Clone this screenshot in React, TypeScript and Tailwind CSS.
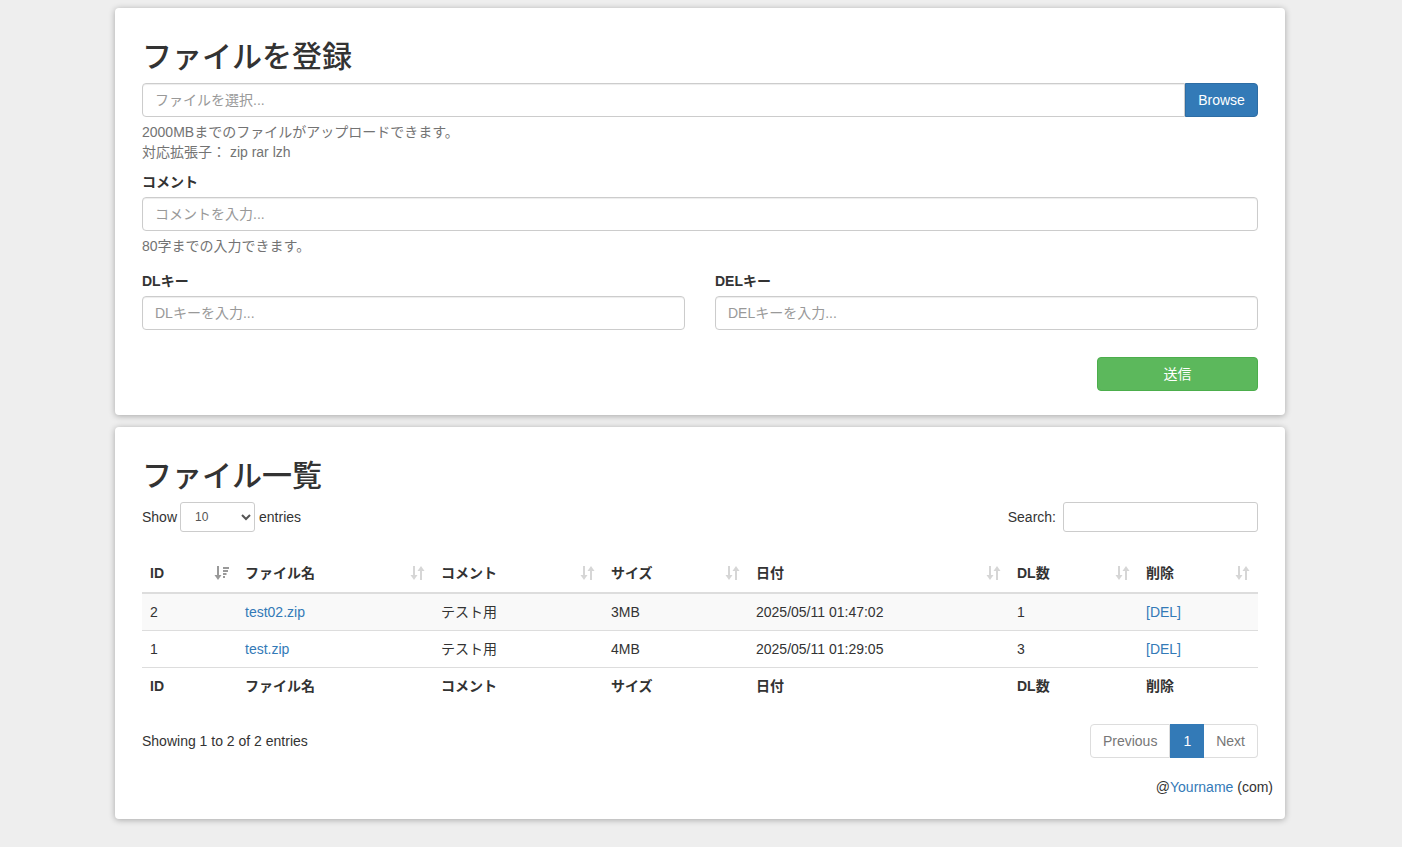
import React from "react";

const font = {
  fontFamily:
    '"Liberation Sans", "Noto Sans CJK JP", Arial, sans-serif',
};

type Row = {
  id: number;
  name: string;
  comment: string;
  size: string;
  date: string;
  dl: number;
};

const rows: Row[] = [
  { id: 2, name: "test02.zip", comment: "テスト用", size: "3MB", date: "2025/05/11 01:47:02", dl: 1 },
  { id: 1, name: "test.zip", comment: "テスト用", size: "4MB", date: "2025/05/11 01:29:05", dl: 3 },
];

const columns = [
  { label: "ID", width: "w-[95px]" },
  { label: "ファイル名", width: "w-[196px]" },
  { label: "コメント", width: "w-[170px]" },
  { label: "サイズ", width: "w-[145px]" },
  { label: "日付", width: "w-[261px]" },
  { label: "DL数", width: "w-[129px]" },
  { label: "削除", width: "w-[120px]" },
];

function SortIcon({ sorted }: { sorted?: boolean }) {
  if (sorted) {
    return (
      <svg width="15" height="16" viewBox="0 0 15 16" className="text-[#999]">
        <rect x="3" y="1" width="2" height="10" fill="currentColor" />
        <polygon points="0.5,10 7.5,10 4,15" fill="currentColor" />
        <rect x="9" y="2" width="6" height="2" fill="currentColor" />
        <rect x="9" y="5" width="5" height="2" fill="currentColor" />
        <rect x="9" y="8" width="3.5" height="2" fill="currentColor" />
        <rect x="9" y="11" width="2" height="2" fill="currentColor" />
      </svg>
    );
  }
  return (
    <svg width="15" height="16" viewBox="0 0 15 16" className="text-[#d6d6d6]">
      <rect x="3" y="1" width="2" height="10" fill="currentColor" />
      <polygon points="0.5,10 7.5,10 4,15" fill="currentColor" />
      <rect x="10" y="5" width="2" height="10" fill="currentColor" />
      <polygon points="7.5,6 14.5,6 11,1" fill="currentColor" />
    </svg>
  );
}

function TextInput({ placeholder }: { placeholder: string }) {
  return (
    <input
      type="text"
      placeholder={placeholder}
      className="h-[34px] w-full rounded-[4px] border border-[#ccc] bg-white px-[12px] text-[14px] text-[#555] shadow-[inset_0_1px_1px_rgba(0,0,0,0.075)] placeholder:text-[#999] outline-none"
    />
  );
}

function UploadForm() {
  return (
    <div className="rounded-[4px] bg-white px-[27px] pb-[24px] pt-[32px] shadow-[0_1px_6px_rgba(0,0,0,0.3)]">
      <h2 className="mb-[10px] text-[30px] font-medium leading-[33px] text-[#333]">
        ファイルを登録
      </h2>
      <div className="flex h-[34px]">
        <input
          type="text"
          readOnly
          placeholder="ファイルを選択..."
          className="h-[34px] flex-1 rounded-l-[4px] border border-[#ccc] bg-white px-[12px] text-[14px] shadow-[inset_0_1px_1px_rgba(0,0,0,0.075)] placeholder:text-[#999] outline-none"
        />
        <button className="h-[34px] w-[73px] rounded-r-[4px] border border-[#2e6da4] bg-[#337ab7] text-[14px] text-white">
          Browse
        </button>
      </div>
      <p className="mb-[10px] mt-[5px] text-[14px] leading-[20px] text-[#737373]">
        2000MBまでのファイルがアップロードできます。
        <br />
        対応拡張子： zip rar lzh
      </p>
      <label className="mb-[5px] block text-[14px] font-bold leading-[20px] text-[#333]">
        コメント
      </label>
      <TextInput placeholder="コメントを入力..." />
      <p className="mt-[5px] text-[14px] leading-[20px] text-[#737373]">
        80字までの入力できます。
      </p>
      <div className="mt-[15px] grid grid-cols-2 gap-[30px]">
        <div>
          <label className="mb-[5px] block text-[14px] font-bold leading-[20px] text-[#333]">
            DLキー
          </label>
          <TextInput placeholder="DLキーを入力..." />
        </div>
        <div>
          <label className="mb-[5px] block text-[14px] font-bold leading-[20px] text-[#333]">
            DELキー
          </label>
          <TextInput placeholder="DELキーを入力..." />
        </div>
      </div>
      <div className="mt-[27px] flex justify-end">
        <button className="h-[34px] w-[161px] rounded-[4px] border border-[#4cae4c] bg-[#5cb85c] text-[14px] text-white">
          送信
        </button>
      </div>
    </div>
  );
}

function FileList() {
  return (
    <div className="rounded-[4px] bg-white px-[12px] pb-[22px] pt-[32px] shadow-[0_1px_6px_rgba(0,0,0,0.3)]">
      <div className="px-[15px]">
        <h2 className="mb-[10px] text-[30px] font-medium leading-[33px] text-[#333]">
          ファイル一覧
        </h2>
        <div className="flex items-center justify-between text-[14px] text-[#333]">
          <div className="flex items-center">
            <span>Show</span>
            <select
              defaultValue="10"
              className="ml-[3px] mr-[4px] h-[30px] w-[75px] rounded-[3px] border border-[#ccc] bg-white pl-[10px] text-[12px] text-[#555]"
            >
              <option value="10">10</option>
              <option value="25">25</option>
              <option value="50">50</option>
              <option value="100">100</option>
            </select>
            <span>entries</span>
          </div>
          <div className="flex items-center">
            <span>Search:</span>
            <input
              type="search"
              className="ml-[7px] h-[30px] w-[195px] rounded-[3px] border border-[#ccc] bg-white px-[10px] text-[12px] outline-none"
            />
          </div>
        </div>

        <table className="mt-[23px] w-full table-fixed border-collapse text-[14px] leading-[20px] text-[#333]">
          <thead>
            <tr className="border-b-2 border-[#ddd]">
              {columns.map((c, i) => (
                <th key={c.label} className={`${c.width} pb-[9px] pl-[8px] pr-[8px] pt-[8px] text-left font-bold`}>
                  <div className="flex items-center justify-between">
                    <span>{c.label}</span>
                    <SortIcon sorted={i === 0} />
                  </div>
                </th>
              ))}
            </tr>
          </thead>
          <tbody>
            {rows.map((r, i) => (
              <tr key={r.id} className={`${i > 0 ? "border-t border-[#ddd]" : ""} ${i % 2 === 0 ? "bg-[#f9f9f9]" : ""}`}>
                <td className="p-[8px]">{r.id}</td>
                <td className="p-[8px]">
                  <a href="#" className="text-[#337ab7]">{r.name}</a>
                </td>
                <td className="p-[8px]">{r.comment}</td>
                <td className="p-[8px]">{r.size}</td>
                <td className="p-[8px]">{r.date}</td>
                <td className="p-[8px]">{r.dl}</td>
                <td className="p-[8px]">
                  <a href="#" className="text-[#337ab7]">[DEL]</a>
                </td>
              </tr>
            ))}
          </tbody>
          <tfoot>
            <tr className="border-t border-[#ddd]">
              {columns.map((c) => (
                <th key={c.label} className="p-[8px] text-left font-bold">
                  {c.label}
                </th>
              ))}
            </tr>
          </tfoot>
        </table>

        <div className="mt-[20px] flex items-center justify-between text-[14px] text-[#333]">
          <span>Showing 1 to 2 of 2 entries</span>
          <div className="flex h-[34px] text-[14px] leading-[20px]">
            <span className="rounded-l-[4px] border border-[#ddd] px-[12px] py-[6px] text-[#777]">
              Previous
            </span>
            <span className="border border-[#337ab7] bg-[#337ab7] px-[12px] py-[6px] text-white">
              1
            </span>
            <span className="rounded-r-[4px] border border-l-0 border-[#ddd] px-[12px] py-[6px] text-[#777]">
              Next
            </span>
          </div>
        </div>
      </div>
      <p className="mt-[19px] text-right text-[14px] leading-[20px] text-[#333]">
        @<a href="#" className="text-[#337ab7]">Yourname</a> (com)
      </p>
    </div>
  );
}

export default function App() {
  return (
    <div className="min-h-screen bg-[#eeeeee] pb-[28px] pt-[8px]" style={font}>
      <div className="mx-auto w-[1172px] pr-[2px]">
        <div className="flex flex-col gap-[12px]">
          <UploadForm />
          <FileList />
        </div>
      </div>
    </div>
  );
}
